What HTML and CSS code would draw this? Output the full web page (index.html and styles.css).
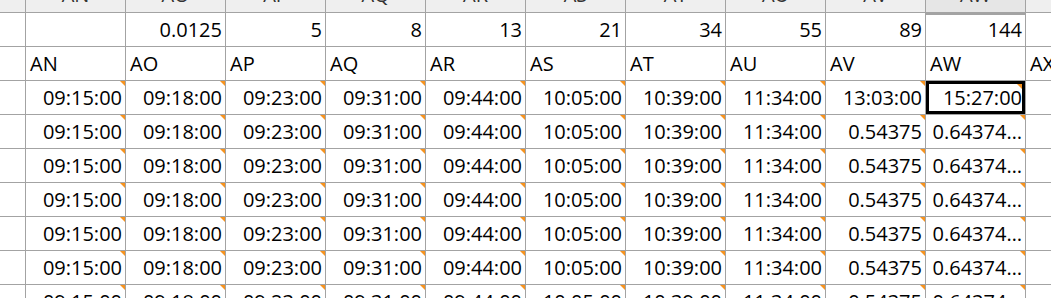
FILE: index.html
```html
<!DOCTYPE html>
<html lang="en">
<head>
<meta charset="utf-8">
<title>Sheet</title>
<link rel="stylesheet" href="styles.css">
</head>
<body>
<div class="sheet">
  <div class="c h"></div><div class="c h"><span>AN</span></div><div class="c h"><span>AO</span></div><div class="c h"><span>AP</span></div><div class="c h"><span>AQ</span></div><div class="c h"><span>AR</span></div><div class="c h"><span>AS</span></div><div class="c h"><span>AT</span></div><div class="c h"><span>AU</span></div><div class="c h"><span>AV</span></div><div class="c h hsel"><span>AW</span></div><div class="c h"><span>AX</span></div>

  <div class="c"></div><div class="c r"></div><div class="c r">0.0125</div><div class="c r">5</div><div class="c r">8</div><div class="c r">13</div><div class="c r">21</div><div class="c r">34</div><div class="c r">55</div><div class="c r">89</div><div class="c r csel">144</div><div class="c"></div>

  <div class="c"></div><div class="c">AN</div><div class="c">AO</div><div class="c">AP</div><div class="c">AQ</div><div class="c">AR</div><div class="c">AS</div><div class="c">AT</div><div class="c">AU</div><div class="c">AV</div><div class="c">AW</div><div class="c">AX</div>

  <div class="c"></div><div class="c r n">09:15:00</div><div class="c r n">09:18:00</div><div class="c r n">09:23:00</div><div class="c r n">09:31:00</div><div class="c r n">09:44:00</div><div class="c r n">10:05:00</div><div class="c r n">10:39:00</div><div class="c r n">11:34:00</div><div class="c r n">13:03:00</div><div class="c r n sel">15:27:00</div><div class="c"></div>

  <div class="c"></div><div class="c r n">09:15:00</div><div class="c r n">09:18:00</div><div class="c r n">09:23:00</div><div class="c r n">09:31:00</div><div class="c r n">09:44:00</div><div class="c r n">10:05:00</div><div class="c r n">10:39:00</div><div class="c r n">11:34:00</div><div class="c r n">0.54375</div><div class="c r n">0.64374…</div><div class="c"></div>

  <div class="c"></div><div class="c r n">09:15:00</div><div class="c r n">09:18:00</div><div class="c r n">09:23:00</div><div class="c r n">09:31:00</div><div class="c r n">09:44:00</div><div class="c r n">10:05:00</div><div class="c r n">10:39:00</div><div class="c r n">11:34:00</div><div class="c r n">0.54375</div><div class="c r n">0.64374…</div><div class="c"></div>

  <div class="c"></div><div class="c r n">09:15:00</div><div class="c r n">09:18:00</div><div class="c r n">09:23:00</div><div class="c r n">09:31:00</div><div class="c r n">09:44:00</div><div class="c r n">10:05:00</div><div class="c r n">10:39:00</div><div class="c r n">11:34:00</div><div class="c r n">0.54375</div><div class="c r n">0.64374…</div><div class="c"></div>

  <div class="c"></div><div class="c r n">09:15:00</div><div class="c r n">09:18:00</div><div class="c r n">09:23:00</div><div class="c r n">09:31:00</div><div class="c r n">09:44:00</div><div class="c r n">10:05:00</div><div class="c r n">10:39:00</div><div class="c r n">11:34:00</div><div class="c r n">0.54375</div><div class="c r n">0.64374…</div><div class="c"></div>

  <div class="c"></div><div class="c r n">09:15:00</div><div class="c r n">09:18:00</div><div class="c r n">09:23:00</div><div class="c r n">09:31:00</div><div class="c r n">09:44:00</div><div class="c r n">10:05:00</div><div class="c r n">10:39:00</div><div class="c r n">11:34:00</div><div class="c r n">0.54375</div><div class="c r n">0.64374…</div><div class="c"></div>

  <div class="c"></div><div class="c r n">09:15:00</div><div class="c r n">09:18:00</div><div class="c r n">09:23:00</div><div class="c r n">09:31:00</div><div class="c r n">09:44:00</div><div class="c r n">10:05:00</div><div class="c r n">10:39:00</div><div class="c r n">11:34:00</div><div class="c r n">0.54375</div><div class="c r n">0.64374…</div><div class="c"></div>

  <div class="c"></div><div class="c r n">09:15:00</div><div class="c r n">09:18:00</div><div class="c r n">09:23:00</div><div class="c r n">09:31:00</div><div class="c r n">09:44:00</div><div class="c r n">10:05:00</div><div class="c r n">10:39:00</div><div class="c r n">11:34:00</div><div class="c r n">0.54375</div><div class="c r n">0.64374…</div><div class="c"></div>
</div>
</body>
</html>
```

FILE: styles.css
```css
html, body {
  margin: 0;
  padding: 0;
  background: #ffffff;
}
body {
  width: 1051px;
  height: 298px;
  overflow: hidden;
  font-family: "Open Sans", "Noto Sans", sans-serif;
  font-size: 20px;
  color: #000;
}
.sheet {
  display: grid;
  grid-template-columns: 26px repeat(10, 100px) 100px;
  grid-template-rows: 13px;
  grid-auto-rows: 34px;
  background: #fff;
}
.c {
  position: relative;
  box-sizing: border-box;
  border-right: 1px solid #a3a3a3;
  border-bottom: 1px solid #a3a3a3;
  display: flex;
  align-items: flex-end;
  justify-content: flex-start;
  padding: 0 3px 6px 4px;
  line-height: 20px;
  white-space: nowrap;
  overflow: hidden;
}
.r {
  justify-content: flex-end;
}
.h {
  background: #efefef;
  justify-content: center;
  padding: 0 0 7px 0;
  color: #333;
}
.hsel {
  background: #e6e6e6;
}
.csel {
  box-shadow: inset 0 2px 0 #a3a3a3;
}
.n::after {
  content: "";
  position: absolute;
  top: 0;
  right: 0;
  width: 0;
  height: 0;
  border-top: 5px solid #f7931e;
  border-left: 5px solid transparent;
}
.sel {
  box-shadow: inset 0 0 0 3px #000;
  overflow: visible;
}
.sel::after {
  top: 3px;
  right: 3px;
}
```
